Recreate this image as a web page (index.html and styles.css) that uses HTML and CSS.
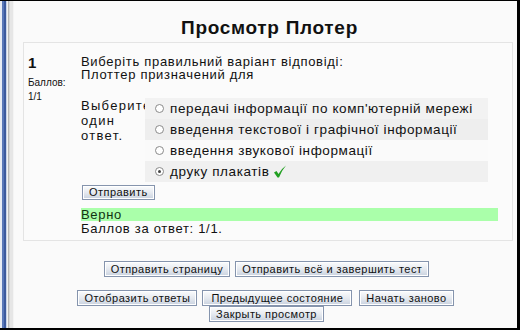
FILE: index.html
```html
<!DOCTYPE html>
<html lang="ru">
<head>
<meta charset="utf-8">
<link rel="stylesheet" href="styles.css">
</head>
<body>
<div class="frame">
  <div class="edge"></div>
  <div class="page">
    <h1 class="title">Просмотр Плотер</h1>
    <div class="que">
      <div class="info">
        <div class="no">1</div>
        <div class="grade">Баллов:<br>1/1</div>
      </div>
      <div class="content">
        <div class="qtext">Виберіть правильний варіант відповіді:<br>Плоттер призначений для</div>
        <div class="ablock">
          <div class="prompt">Выберите один ответ.</div>
          <div class="answers">
            <div class="row r0"><span class="radio"></span>передачі інформації по комп'ютерній мережі</div>
            <div class="row r1"><span class="radio"></span>введення текстової і графічної інформації</div>
            <div class="row r2"><span class="radio"></span>введення звукової інформації</div>
            <div class="row r3"><span class="radio on"></span>друку плакатів <svg class="tick" width="14" height="13" viewBox="0 0 14 13"><path d="M1 7.5 L3.5 6 L5.5 9 Q8 4 13 0.5 Q9 5 6 12.5 L4.5 12.5 Z" fill="#22a022"/></svg></div>
          </div>
        </div>
        <button class="btn send">Отправить</button>
        <div class="correct">Верно</div>
        <div class="score">Баллов за ответ: 1/1.</div>
      </div>
    </div>
    <div class="btnrow first">
      <button class="btn">Отправить страницу</button>
      <button class="btn">Отправить всё и завершить тест</button>
    </div>
    <div class="btnrow second">
      <button class="btn">Отобразить ответы</button>
      <button class="btn wide">Предыдущее состояние</button>
      <button class="btn">Начать заново</button>
    </div>
    <div class="btnrow third">
      <button class="btn">Закрыть просмотр</button>
    </div>
  </div>
</div>
</body>
</html>
```
FILE: styles.css
```css
html, body {
  margin: 0;
  padding: 0;
  background: #000;
}
body {
  width: 520px;
  height: 330px;
  overflow: hidden;
  font-family: "Liberation Sans", Arial, sans-serif;
  color: #111;
}
.frame {
  display: flex;
  width: 517px;
  height: 327px;
  margin-top: 1px;
  background: #fafafa;
}
.edge {
  width: 14px;
  flex: none;
  background: linear-gradient(to right, #e8ecf4 0 2px, #5a78b8 2px 4px, #3c5a9e 4px 6px, #c9d3e6 6px 7px, #f2f2f2 7px 8px, #b8b8b8 8px 9px, #d6d6d6 9px 10px, #e6e6e6 10px 13px, #f4f4f4 13px 14px);
}
.page {
  flex: 1;
  display: flex;
  flex-direction: column;
  padding-top: 15px;
}
.title {
  margin: 0;
  text-align: center;
  font-size: 19px;
  font-weight: bold;
  letter-spacing: 0.7px;
  line-height: 24px;
  padding-left: 8px;
  color: #111;
}
.que {
  display: flex;
  margin: 2px 4px 0 9px;
  border: 1px solid #e4e4e4;
  background: #fbfbfb;
  padding: 12px 0 6px 4px;
  height: 179px;
}
.info {
  width: 53px;
  flex: none;
}
.no {
  font-weight: bold;
  font-size: 15px;
  line-height: 15px;
}
.grade {
  font-size: 10px;
  line-height: 14px;
  margin-top: 6px;
  margin-right: -10px;
}
.content {
  flex: 1;
  display: flex;
  flex-direction: column;
  align-items: flex-start;
  font-size: 13px;
  letter-spacing: 0.7px;
}
.qtext {
  line-height: 13px;
}
.ablock {
  display: flex;
  margin-top: 17px;
}
.prompt {
  width: 64px;
  overflow: hidden;
  line-height: 15px;
  letter-spacing: 1.3px;
  white-space: normal;
}
.answers {
  width: 343px;
  display: flex;
  flex-direction: column;
}
.row {
  display: flex;
  align-items: center;
  height: 21px;
  padding-left: 10px;
  white-space: nowrap;
  font-size: 13.5px;
  letter-spacing: 0.6px;
}
.r0 { background: #f2f2f2; }
.r1 { background: #eeeeee; }
.r2 { background: #fafafa; }
.r3 { background: #f0f0f0; }
.radio {
  width: 9px;
  height: 9px;
  border: 1px solid #8a8a8a;
  border-radius: 50%;
  background: #fff;
  margin-right: 6px;
  box-sizing: border-box;
  position: relative;
  flex: none;
}
.radio.on::after {
  content: "";
  position: absolute;
  left: 2px;
  top: 2px;
  width: 3px;
  height: 3px;
  border-radius: 50%;
  background: #444;
}
.tick {
  margin-left: 4px;
}
.btn {
  font-family: "Liberation Sans", Arial, sans-serif;
  font-size: 11px;
  letter-spacing: 0.45px;
  line-height: 13px;
  height: 16px;
  padding: 0 6px;
  color: #111;
  background: linear-gradient(#fbfcfd, #e6eaf0 50%, #c9d2df);
  border: 1px solid #8594ad;
  border-radius: 0;
  box-shadow: inset 0 0 0 1px #fff;
}
.btn.wide {
  padding: 0 8px;
  margin-right: 2px;
}
.send {
  margin-top: 3px;
  margin-left: 1px;
}
.correct {
  margin-top: 8px;
  width: 417px;
  background: #aaffaa;
  line-height: 13px;
  color: #113311;
}
.score {
  line-height: 14px;
  margin-top: 1px;
}
.btnrow {
  display: flex;
  justify-content: center;
  gap: 5px;
}
.btnrow.first {
  margin-top: 20px;
  padding-left: 2px;
}
.btnrow.second {
  margin-top: 13px;
  padding-left: 0;
}
.btnrow.third {
  margin-top: 0;
  padding-left: 2px;
}
```
